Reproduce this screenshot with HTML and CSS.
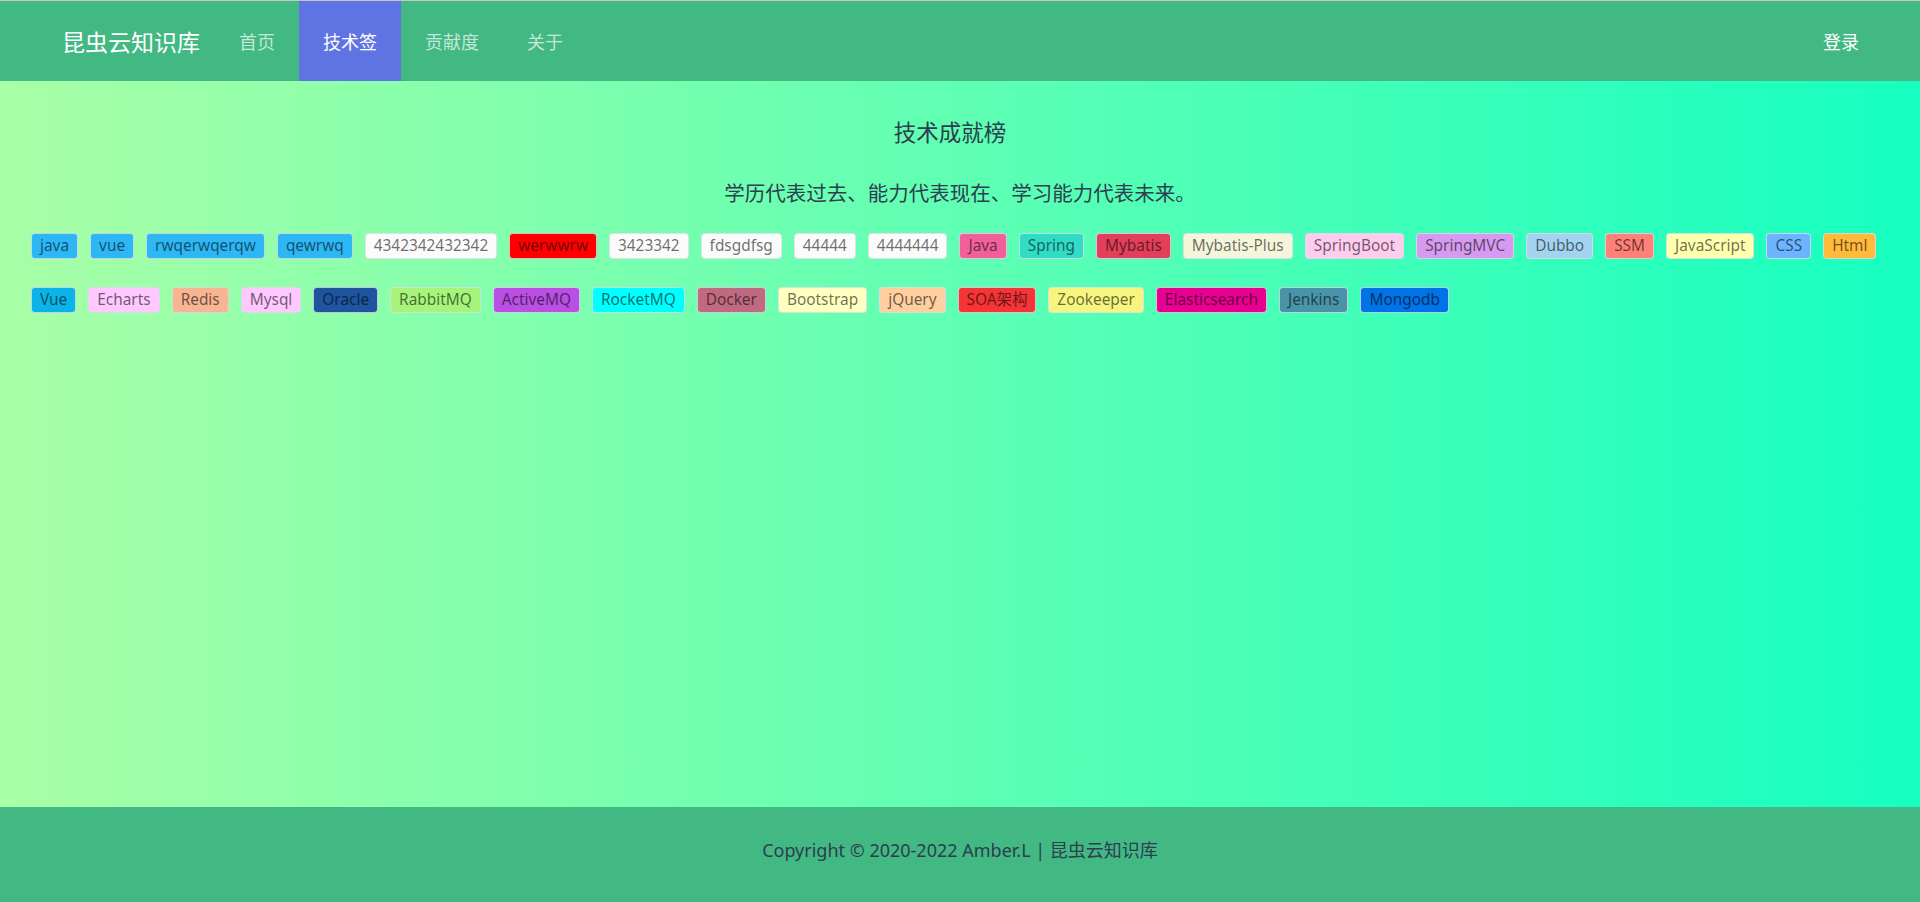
FILE: index.html
```html
<!DOCTYPE html>
<html lang="zh-CN">
<head>
<meta charset="utf-8">
<title>昆虫云知识库</title>
<link rel="stylesheet" href="styles.css">
</head>
<body>
<div class="app">
  <header class="navbar">
    <div class="brand">昆虫云知识库</div>
    <nav class="menu">
      <a class="menu-item">首页</a>
      <a class="menu-item active">技术签</a>
      <a class="menu-item">贡献度</a>
      <a class="menu-item">关于</a>
    </nav>
    <a class="login">登录</a>
  </header>

  <main class="content">
    <h2 class="title">技术成就榜</h2>
    <p class="subtitle">学历代表过去、能力代表现在、学习能力代表未来。</p>
    <div class="tag-row">
      <span class="tag" style="background:#2db7f5">java</span>
      <span class="tag" style="background:#2db7f5">vue</span>
      <span class="tag" style="background:#2db7f5">rwqerwqerqw</span>
      <span class="tag" style="background:#2db7f5">qewrwq</span>
      <span class="tag" style="background:#fbfbfb">4342342432342</span>
      <span class="tag" style="background:#ff0000">werwwrw</span>
      <span class="tag" style="background:#fbfbfb">3423342</span>
      <span class="tag" style="background:#fbfbfb">fdsgdfsg</span>
      <span class="tag" style="background:#fbfbfb">44444</span>
      <span class="tag" style="background:#fbfbfb">4444444</span>
      <span class="tag" style="background:#f2609b">Java</span>
      <span class="tag" style="background:#30dcc6">Spring</span>
      <span class="tag" style="background:#e33e5a">Mybatis</span>
      <span class="tag" style="background:#f5f5dc">Mybatis-Plus</span>
      <span class="tag" style="background:#ffccee">SpringBoot</span>
      <span class="tag" style="background:#d69bf0">SpringMVC</span>
      <span class="tag" style="background:#a3d3ef">Dubbo</span>
      <span class="tag" style="background:#ff7f79">SSM</span>
      <span class="tag" style="background:#ffffb0">JavaScript</span>
      <span class="tag" style="background:#6cb4ff">CSS</span>
      <span class="tag" style="background:#ffb93c">Html</span>
    </div>
    <div class="tag-row">
      <span class="tag" style="background:#0ab4e8">Vue</span>
      <span class="tag" style="background:#ffc8ff">Echarts</span>
      <span class="tag" style="background:#f7b594">Redis</span>
      <span class="tag" style="background:#ffc8ff">Mysql</span>
      <span class="tag" style="background:#1f549e">Oracle</span>
      <span class="tag" style="background:#a6f57a">RabbitMQ</span>
      <span class="tag" style="background:#b94fe3">ActiveMQ</span>
      <span class="tag" style="background:#00ffff">RocketMQ</span>
      <span class="tag" style="background:#bf6a80">Docker</span>
      <span class="tag" style="background:#ffffc0">Bootstrap</span>
      <span class="tag" style="background:#ffcfa0">jQuery</span>
      <span class="tag" style="background:#f53438">SOA架构</span>
      <span class="tag" style="background:#f5f57f">Zookeeper</span>
      <span class="tag" style="background:#e80090">Elasticsearch</span>
      <span class="tag" style="background:#4a94aa">Jenkins</span>
      <span class="tag" style="background:#0073e6">Mongodb</span>
    </div>
  </main>

  <footer class="footer">Copyright © 2020-2022 Amber.L | 昆虫云知识库</footer>
</div>
</body>
</html>
```

FILE: styles.css
```css
* { box-sizing: border-box; }

html, body {
  margin: 0;
  padding: 0;
  height: 100%;
}

body {
  font-family: "Noto Sans", "Noto Sans CJK SC", sans-serif;
  color: #2c3e50;
}

.app {
  min-height: 100vh;
  display: flex;
  flex-direction: column;
  background: linear-gradient(to right, #a8ffa6, #16ffc0);
}

.navbar {
  display: flex;
  align-items: stretch;
  height: 81px;
  border-top: 1px solid #c6c6c6;
  background: #42b883;
  padding: 0 37px 0 62px;
}

.brand {
  display: flex;
  align-items: center;
  font-family: "Noto Sans CJK SC", sans-serif;
  font-size: 23px;
  color: #ffffff;
  margin-right: 15px;
}

.menu {
  display: flex;
}

.menu-item,
.login {
  display: flex;
  align-items: center;
  padding: 0 24px;
  font-family: "Noto Sans CJK SC", sans-serif;
  font-size: 18px;
  color: rgba(255, 255, 255, 0.7);
  cursor: pointer;
}

.menu-item.active {
  background: #5f73e3;
  color: #ffffff;
}

.login {
  margin-left: auto;
  color: #ffffff;
}

.content {
  flex: 1;
  padding: 34px 25px 0;
}

.title {
  margin: 0;
  padding-right: 20px;
  text-align: center;
  font-family: "Noto Sans CJK SC", sans-serif;
  font-weight: normal;
  font-size: 22.5px;
  line-height: 32px;
  color: #2c3e50;
}

.subtitle {
  margin: 31px 0 0;
  text-align: center;
  font-family: "Noto Sans CJK SC", sans-serif;
  font-size: 20.5px;
  line-height: 28px;
  color: #2c3e50;
}

.tag-row {
  display: flex;
  gap: 12px;
  padding-left: 6px;
  margin-top: 27px;
}

.tag-row + .tag-row {
  margin-top: 28px;
}

.tag {
  display: inline-block;
  height: 26px;
  line-height: 24px;
  padding: 0 8px;
  border: 1px solid rgba(215, 220, 230, 0.85);
  border-radius: 4px;
  font-size: 15.4px;
  color: rgba(0, 0, 0, 0.58);
  white-space: nowrap;
}

.footer {
  height: 95px;
  padding-top: 30px;
  background: #42b883;
  text-align: center;
  font-family: "Noto Sans", "Noto Sans CJK SC", sans-serif;
  font-size: 18px;
  line-height: 26px;
  color: #2c3e50;
}
```
